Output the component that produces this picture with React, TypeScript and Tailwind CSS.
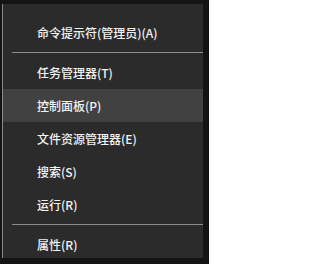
const items: (string | null)[] = [
  "命令提示符(管理员)(A)",
  null,
  "任务管理器(T)",
  "控制面板(P)",
  "文件资源管理器(E)",
  "搜索(S)",
  "运行(R)",
  null,
  "属性(R)",
]

export default function App() {
  return (
    <div className="h-[264px] w-[209px] overflow-hidden bg-[#141414] pl-[2px] pt-[4px]">
      <div
        className="flex h-[254px] w-[201px] flex-col overflow-hidden border-l border-[#8a8a8a] bg-[#2b2b2b] pt-[12px] text-[12px] font-medium text-[#f2f2f2]"
        style={{ fontFamily: '"Noto Sans CJK SC", "Noto Sans", sans-serif' }}
      >
        {items.map((label, i) =>
          label === null ? (
            <div key={i} className="flex h-[7px] shrink-0 items-center pl-[9px]">
              <div className="h-px w-full bg-[#8c8c8c]" />
            </div>
          ) : (
            <div
              key={i}
              className={
                "flex h-[33px] shrink-0 items-center pl-[34px] leading-none " +
                (label === "控制面板(P)" ? "bg-[#414141]" : "")
              }
            >
              {label}
            </div>
          )
        )}
      </div>
    </div>
  )
}
